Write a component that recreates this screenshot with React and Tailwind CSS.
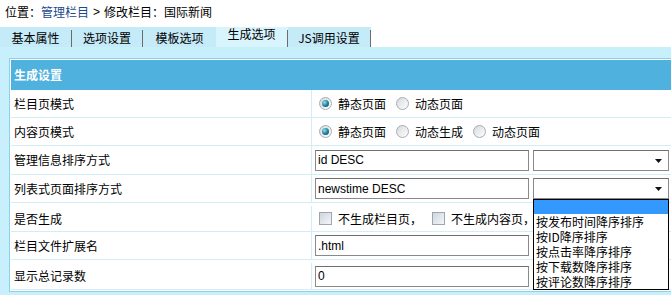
import React from 'react'

const TABS = [
  { label: '基本属性', w: 'w-[72px]' },
  { label: '选项设置', w: 'w-[71px]' },
  { label: '模板选项', w: 'w-[73px]' },
  { label: '生成选项', w: 'w-[72px]', active: true },
  { label: 'JS调用设置', w: 'w-[83px]' },
]

const SORT_OPTS = ['按发布时间降序排序', '按ID降序排序', '按点击率降序排序', '按下载数降序排序', '按评论数降序排序']

export default function App() {
  return (
    <div className="relative h-[295px] w-[671px] overflow-hidden bg-white font-['Noto_Sans_CJK_SC',sans-serif] text-[12px] leading-none text-black">
      {/* breadcrumb */}
      <div className="flex h-[27px] items-start pl-[5px] pt-[6px]">
        位置：<span className="text-[#1b4a8c]">管理栏目</span>
        <span className="px-[4px] font-['Liberation_Sans',sans-serif]">&gt;</span>
        修改栏目：国际新闻
      </div>

      {/* tabs */}
      <div className="flex h-[20px]">
        {TABS.map((t, i) => (
          <div
            key={t.label}
            className={
              'flex h-full ' +
              t.w +
              (t.active ? ' items-start bg-[#d8f4fd] pt-[1px]' : ' items-center bg-[#c5ebf8] pt-[1px]')
            }
          >
            <span className="flex-1 text-center">{t.label}</span>
            {!TABS[i + 1]?.active && <span className="mb-[1px] mt-[2px] h-[17px] w-px self-center bg-[#6b6b6b]" />}
          </div>
        ))}
      </div>

      {/* body */}
      <div className="h-full bg-[#c8effc] pl-[9px] pt-[11px]">
        <div className="w-[720px] border border-[#8dd0e8] bg-white p-px">
          <div className="flex h-[30px] items-center bg-[#4fb1dd] pl-[3px] font-bold text-white">生成设置</div>

          <Row label="栏目页模式" h="h-[28px]">
            <Radio checked />
            <span className="ml-[6px]">静态页面</span>
            <Radio className="ml-[10px]" />
            <span className="ml-[6px]">动态页面</span>
          </Row>

          <Row label="内容页模式" h="h-[28px]">
            <Radio checked />
            <span className="ml-[6px]">静态页面</span>
            <Radio className="ml-[10px]" />
            <span className="ml-[6px]">动态生成</span>
            <Radio className="ml-[10px]" />
            <span className="ml-[6px]">动态页面</span>
          </Row>

          <Row label="管理信息排序方式" h="h-[29px]" input>
            <TextInput value="id DESC" />
            <Select />
          </Row>

          <Row label="列表式页面排序方式" h="h-[28px]" input>
            <TextInput value="newstime DESC" />
            <Select open />
          </Row>

          <Row label="是否生成" h="h-[29px] pt-[3px]">
            <Check />
            <span className="ml-[6px]">不生成栏目页，</span>
            <Check className="ml-[10px]" />
            <span className="ml-[6px]">不生成内容页，</span>
          </Row>

          <Row label="栏目文件扩展名" h="h-[28px]" input>
            <TextInput value=".html" />
          </Row>

          <Row label="显示总记录数" h="h-[30px] pt-[3px]" input>
            <TextInput value="0" />
          </Row>
        </div>
      </div>
    </div>
  )
}

function Row({ label, h, input, children }) {
  return (
    <div className={'flex border-b border-[#d3edf6] ' + h}>
      <div className="flex w-[301px] items-center border-r border-[#d3edf6] pl-[3px]">{label}</div>
      <div className={'flex flex-1 items-center ' + (input ? 'pl-[3px]' : 'pl-[7px]')}>{children}</div>
    </div>
  )
}

function TextInput({ value }) {
  return (
    <div className="flex h-[21px] w-[214px] items-center border border-[#8a8a8a] border-t-[#6f6f6f] bg-white pl-[2px] font-['Liberation_Sans',sans-serif] text-[12px]">
      {value}
    </div>
  )
}

function Select({ open }) {
  return (
    <div className="relative ml-[4px] h-[21px] w-[136px] border border-[#8a8a8a] border-t-[#6f6f6f] bg-white">
      <svg className="absolute right-[6px] top-[8px]" width="7" height="4" viewBox="0 0 7 4">
        <path d="M0 0h7L3.5 4z" fill="#111" />
      </svg>
      {open && (
        <div className="absolute -left-px top-[20px] z-10 w-[136px] border border-black bg-white">
          <div className="h-[14px] bg-[#3399ff]" />
          {SORT_OPTS.map((o) => (
            <div key={o} className="h-[15px] overflow-hidden pl-[2px] leading-[15px]">
              {o}
            </div>
          ))}
        </div>
      )}
    </div>
  )
}

function Radio({ checked, className = '' }) {
  return (
    <span
      className={
        'flex h-[13px] w-[13px] items-center justify-center rounded-full border border-[#a3adb5] bg-[linear-gradient(135deg,#d6d9dc,#ffffff)] ' +
        className
      }
    >
      {checked && (
        <span className="h-[7px] w-[7px] rounded-full bg-[radial-gradient(circle_at_35%_35%,#8fe0ec,#1a7b95_55%,#0b4a60)]" />
      )}
    </span>
  )
}

function Check({ className = '' }) {
  return (
    <span
      className={
        'h-[13px] w-[13px] border border-[#9aa6b2] bg-[linear-gradient(135deg,#cfd6df,#f4f6f8)] ' + className
      }
    />
  )
}
